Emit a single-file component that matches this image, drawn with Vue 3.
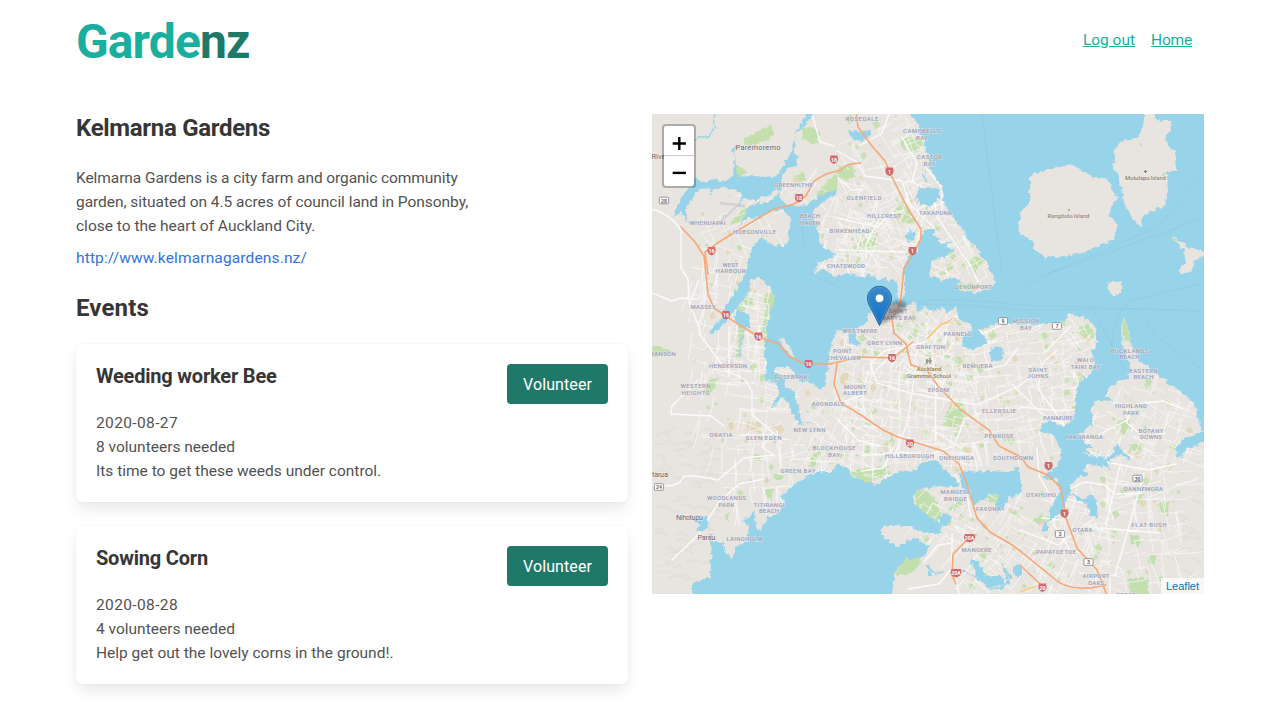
<script setup>
const events = [
  { title: 'Weeding worker Bee', date: '2020-08-27', need: '8 volunteers needed', text: 'Its time to get these weeds under control.' },
  { title: 'Sowing Corn', date: '2020-08-28', need: '4 volunteers needed', text: 'Help get out the lovely corns in the ground!.' },
]

// Small deterministic generator for street texture and parks
let seed = 7
const rnd = () => {
  seed = (seed * 16807) % 2147483647
  return seed / 2147483647
}
// x, y, width, height, grid angle (degrees), spacing
const districts = [
  [838, 116, 95, 150, -28, 13], [835, 180, 110, 90, 20, 14], [786, 168, 40, 40, 40, 14],
  [800, 215, 60, 60, 10, 12], [700, 195, 75, 55, -30, 18], [690, 240, 65, 130, 12, 13],
  [735, 280, 35, 90, 5, 11], [700, 355, 80, 90, 8, 13], [835, 325, 130, 130, 12, 9],
  [895, 308, 60, 60, 38, 7], [950, 320, 130, 130, -14, 11], [800, 385, 60, 85, 32, 12],
  [720, 430, 110, 70, -6, 14], [1095, 375, 105, 80, 24, 12], [1040, 450, 60, 140, 22, 12],
  [920, 480, 100, 60, 30, 11], [950, 530, 100, 60, 36, 12], [1090, 455, 90, 130, -12, 14],
  [932, 225, 60, 70, -32, 10], [850, 440, 120, 35, 4, 11], [1060, 320, 40, 60, -35, 10],
]
let streets = ''
const parks = []
const tans = []
for (const [x, y, w, h, a, s] of districts) {
  const r = (a * Math.PI) / 180
  const n = Math.round((w * h) / (s * s) * 1.7)
  for (let i = 0; i < n; i++) {
    const px = x + Math.round((rnd() * w) / s) * s + rnd() * 3
    const py = y + Math.round((rnd() * h) / s) * s + rnd() * 3
    const t = r + (rnd() > 0.5 ? Math.PI / 2 : 0) + (rnd() - 0.5) * 0.35
    const l = s * (0.7 + rnd() * 1.8)
    const dx = Math.cos(t) * l
    const dy = Math.sin(t) * l
    streets += `M${px.toFixed(1)} ${py.toFixed(1)}q${(dx / 2 + rnd() * 3).toFixed(1)} ${(dy / 2 + rnd() * 3).toFixed(1)} ${dx.toFixed(1)} ${dy.toFixed(1)}`
  }
  for (let i = 0; i < n / 3.6; i++) {
    const px = x + rnd() * w
    const py = y + rnd() * h
    const b = 1.2 + rnd() * rnd() * 5.5
    const d = `M${px.toFixed(1)} ${py.toFixed(1)}l${b.toFixed(1)} ${(-b * 0.5).toFixed(1)} ${(b * 0.6).toFixed(1)} ${b.toFixed(1)} ${(-b).toFixed(1)} ${(b * 0.7).toFixed(1)}z`
    if (rnd() > 0.25) parks.push(d)
    else tans.push(d)
  }
}
const parkPath = parks.join('')
const tanPath = tans.join('')

// Hill shading in the western ranges and eastern hills
let hills = ''
for (let i = 0; i < 90; i++) {
  const west = i < 68
  const x = west ? 652 + rnd() * 60 : 1165 + rnd() * 38
  const y = west ? 425 + rnd() * 165 : 460 + rnd() * 115
  hills += `M${x.toFixed(1)} ${y.toFixed(1)}q${(3 + rnd() * 5).toFixed(1)} ${(-5 + rnd() * 4).toFixed(1)} ${(6 + rnd() * 9).toFixed(1)} ${(-4 + rnd() * 10).toFixed(1)}`
}

// text, centre x, baseline y, width
const labels = [
  ['ROSEDALE', 862, 121, 33], ['CAMPBELLS', 922, 133, 38], ['BAY', 922, 139.5, 12], ['CASTOR', 929.5, 159, 25], ['BAY', 929.5, 165.5, 12],
  ['GREENHITHE', 793.5, 187, 39], ['WHENUAPAI', 707.5, 225, 36], ['HOBSONVILLE', 754.5, 234, 43],
  ['BEACH', 810, 218, 20], ['HAVEN', 810, 224.5, 20], ['GLENFIELD', 864, 199.5, 35], ['HILLCREST', 884, 217.5, 34],
  ['TAKAPUNA', 935.5, 215, 33], ['BIRKENHEAD', 849.5, 233, 40], ['CHATSWOOD', 846, 268, 38],
  ['WEST', 730.5, 266.5, 16], ['HARBOUR', 730.5, 273, 30], ['MASSEY', 703, 309, 25], ['WANSON', 662.3, 355.5, 27],
  ['HENDERSON', 728, 368, 38], ['WESTERN', 695.5, 387.5, 30], ['HEIGHTS', 695.5, 394.5, 28], ['ROSEBANK', 791, 378.5, 33],
  ['POINT', 842.5, 353, 19], ['CHEVALIER', 843.5, 359.5, 34], ['AVONDALE', 828, 405.5, 33], ['NEW LYNN', 809.5, 431.5, 32],
  ['SAINT', 898, 313, 19], ['MARYS BAY', 898, 320, 35], ['WESTMERE', 860, 332.5, 35], ['GREY LYNN', 884.5, 344.5, 35],
  ['GRAFTON', 930.5, 348.5, 29], ['PARNELL', 957.5, 336, 28], ['DEVONPORT', 973.5, 289, 37], ['MOUNT', 855, 388.5, 22],
  ['ALBERT', 855, 395, 24], ['EPSOM', 938.5, 391.5, 21], ['REMUERA', 977.5, 368, 30], ['ELLERSLIE', 999, 412.5, 34],
  ['MISSION', 1026, 323, 27], ['BAY', 1026, 329.5, 12], ['SAINT', 1038, 371.5, 19], ['JOHNS', 1038, 378, 21],
  ['WAI O', 1085.5, 362, 17], ['TAIKI BAY', 1085.5, 369, 30], ['BUCKLANDS', 1129.5, 352.5, 38], ['BEACH', 1129.5, 359, 20],
  ['EASTERN', 1143.5, 372.5, 28], ['BEACH', 1143.5, 379, 20], ['HIGHLAND', 1131, 408, 32], ['PARK', 1131, 414.5, 16],
  ['PANMURE', 1058, 419.5, 30], ['PAKURANGA', 1084, 439, 38], ['BOTANY', 1151, 432.5, 25], ['DOWNS', 1151, 439, 22],
  ['PENROSE', 999, 437.5, 29], ['SOUTHDOWN', 1013, 460, 40], ['ONEHUNGA', 956.5, 460, 35], ['HILLSBOROUGH', 909.5, 457.5, 49],
  ['BLOCKHOUSE', 834, 449.5, 43], ['BAY', 834, 456.5, 12], ['ORATIA', 721, 437, 23], ['GLEN EDEN', 763.5, 440, 36],
  ['GREEN BAY', 798, 473, 35], ['WOODLANDS', 726.5, 500, 39], ['PARK', 726.5, 506.5, 16], ['TITIRANGI', 769, 506.5, 31],
  ['BEACH', 769, 513, 20], ['LAINGHOLM', 744.5, 540.5, 36], ['MANGERE', 955.5, 494, 30], ['BRIDGE', 955.5, 500.5, 23],
  ['FAVONA', 988.5, 510.5, 25], ['MANGERE', 976.5, 552, 30], ['OTAHUHU', 1041, 497, 30], ['OTARA', 1082.5, 532, 20],
  ['PAPATOETOE', 1056, 553.5, 40], ['DANNEMORA', 1143.5, 490.5, 39], ['FLAT BUSH', 1149, 526.5, 35],
  ['AIRPORT', 1096, 578, 27], ['OAKS', 1096, 584.5, 16], ['TOTARA', 1128, 596.5, 24],
]
// text, x, y, sign kind
const shields = [
  ['18', 834, 159.5, 'r'], ['18', 799, 198, 'r'], ['16', 711.5, 251, 'r'], ['1', 889.5, 171.5, 'r'], ['1', 912.5, 251, 'r'],
  ['16', 726, 315, 'r'], ['16', 758.5, 336.5, 'r'], ['16', 808.5, 364, 'r'], ['16', 892, 358, 'r'], ['20', 910, 443.5, 'r'],
  ['1', 1048.5, 466, 'r'], ['1', 1064.5, 513.5, 'r'], ['20A', 969.5, 538, 'r'], ['20A', 956, 573, 'r'], ['20', 1042.5, 587.5, 'r'],
  ['28', 664, 200.5, 'w'], ['24', 659, 487, 'w'], ['9', 1003, 321, 'w'], ['7', 1057, 326, 'w'], ['30', 1137.5, 478.5, 'w'],
  ['3', 1060, 534, 'w'], ['3', 1088.5, 562, 'w'],
]
</script>

<template>
  <div class="page">
    <header class="header">
      <h1 class="brand">Garde<span>nz</span></h1>
      <nav class="nav"><a href="#" class="logout">Log out</a><a href="#" class="home">Home</a></nav>
    </header>

    <main class="columns">
      <section class="info">
        <h2 class="title name">Kelmarna Gardens</h2>
        <p class="about">
          <span class="l1">Kelmarna Gardens is a city farm and organic community</span>
          <span class="l2">garden, situated on 4.5 acres of council land in Ponsonby,</span>
          <span>close to the heart of Auckland City.</span>
        </p>
        <a class="site" href="#">http://www.kelmarnagardens.nz/</a>
        <h2 class="title events">Events</h2>
        <article v-for="e in events" :key="e.title" class="card">
          <div class="card-top">
            <h3>{{ e.title }}</h3>
            <button class="btn">Volunteer</button>
          </div>
          <p class="date">{{ e.date }}</p>
          <p>{{ e.need }}</p>
          <p>{{ e.text }}</p>
        </article>
      </section>

      <section class="map">
        <svg class="tiles" viewBox="652 114 552 480" width="552" height="480">
          <defs>
            <linearGradient id="pin" x1="0" y1="0" x2="0" y2="1"><stop offset="0" stop-color="#398bc9" /><stop offset="1" stop-color="#126fc6" /></linearGradient>
            <filter id="soft" x="-30%" y="-30%" width="160%" height="160%"><feGaussianBlur stdDeviation="1.7" /></filter>
            <filter id="coast" filterUnits="userSpaceOnUse" x="640" y="100" width="576" height="506">
              <feTurbulence type="fractalNoise" baseFrequency=".22" numOctaves="2" seed="4" result="n" />
              <feDisplacementMap in="SourceGraphic" in2="n" scale="6" xChannelSelector="R" yChannelSelector="G" />
            </filter>
          </defs>
          <rect x="652" y="114" width="552" height="480" fill="#e8e4df" />
          <path :d="hills" fill="none" stroke="#dfdad4" stroke-width="1.8" opacity=".6" />
          <g fill="#c3dfae">
            <path :d="parkPath" opacity=".85" />
            <g filter="url(#coast)">
              <path d="M743 140l15-9 13-6 3 8-6 8-14 4-8 1zM735 166l9 2 2 5-8 6-3-4zM802 128l10-1 8 6-3 10-9 0-6-7zM794 176l9-3 3 6-5 4zM822 187l15-14v18l-18 10-6-1zM731 222l14-15 5-1-8 13-11 7zM900 138l18-1 5 8-12 10-8-6zM838 165l14 0 4 11-9 5-9-4zM893 214l9-15 3 5 12 18-12 2zM858 243l14-6 8 8-14 6zM967 261l8-5 9 4-9 14zM765 295l8-3 2 17-7 20 1 12-7-8 3-19zM745 293l8 5-1 10-8-5zM652 346l12 2 8 4-4 4-14 1zM740 319l4 2-4 36-4 2zM709 380l9-2-2 10-9 6-4-2zM729 422l6-4-3 10-5 1zM951 404l9-4 6 7-2 15-12 7-9-3 4-12zM953 285l25-2 8 4-14 3-14-2zM1081 326l7-1 6 8 0 6-10-1-6-8zM1124 318l5 9 1 12-5 3-3-14zM1076 378l10-3-4 8-10 2zM1144 378l9 2-3 8zM1117 423l10-5 3 9-7 8-6-4zM1157 504l12-2-1 14-8-5zM1128 578l20 0 0 16h-17zM1130 534l9 1 1 11-9-1zM1147 556l10-1-3 10-6-2zM1034 520l7-6 7 7-4 8zM850 472l14-3 26-3-8 12-17 6-11-7zM890 438l5 2-6 9-6-4zM863 452l10-3-4 9zM914 489l13 2 10 12 6 15-8 3-19-14zM947 508l12-7 3 3-12 8zM895 573l10-14 15-4 1 8-10 11-14 1zM766 487l7 0-1 13-6-3zM811 455l7-3-2 14-6 1zM773 474l12 2-2 3-9 0zM724 515l5-2 0 8-5-1zM755 453l6 3-2 6-5-2zM982 497l19-3-2 10-7-2zM1007 512l11 4 3 3-12-2zM1062 316l4 4-4 7zM1077 346l7 4-6 1zM1129 444h12v7h-10z" />
            </g>
          </g>
          <path :d="tanPath" fill="#e3d6b4" opacity=".8" />
          <path fill="#e0d8bb" d="M745 422l17 0-2 10-12-1zM841 374l8-2-2 14-7-3z" />
          <path fill="#dfd0d4" d="M727 357l7-1-1 7-7 0zM914 199l4-4 2 7-5 2zM1037 523l9-2-4 8z" />
          <path :d="streets" fill="none" stroke="#f8f7f7" stroke-width=".85" opacity=".9" />
          <g fill="none" stroke="#fbfafb" stroke-width="1.4" stroke-linecap="round">
            <path d="M652 209q18 5 28 20M681 228v40l7 11 1 24 10 24 1 8 26 35 19 10 7 11v24l22 18 8 10M699 280l-8 20M652 293l20 8 8-3 19 1M729 327v49M698 380l-26 26-1 8 40 2 13 10M652 485q28 4 31-8 8-3 35 3l26-22 30-3-12-8 10-14M672 560l27-26 20-32 20-18 25-5M812 114l8 28 14 4M837 151l20 11 8 14 37 5 10 30M889 114l-7 19-23 13M838 178l14 12 10-1M837 250l70 2M837 218l40 9 12-12 15-5M906 200l28 28-1 12M902 137l15 26-5 19 21 11 4 24 35 51 6 14M881 215l-15 29v14M925 166l17 22v22" />
            <path d="M955 316l17 5 11 13 37-18 20 10M926 342l-42 9-14 13 7 19 33 10 27 5 40 7 42-19 23-17M868 372l-6 23-25 9M907 344l-19 14-12 12M914 380l-7 44-12 30M932 350l4 40-1 50M964 420l-10 26-23 8-68 1M838 420l20 20 22 6M985 370l20-5 13-17M1013 385l30 30 22 10M1057 350l-15 13-4 26 20 27 11 18M1045 352l26-26M1020 407l40 4 20-2M1071 450l37-20 19-10 10-16 26-3 20 8M1067 434l34 27 47 9 28-6M1127 403v20l18 15 20-5M1144 473l-17 60-12 43M1120 465l-14 60M1063 504l6-15 16-7 20 3 10 9 27-1M1100 528l60 5M1037 448l2 28 17 30-2 19 20 31M1042 518l19 2M1020 530l38 15 34-25M1110 578v16M955 475l12 20 4 23M952 534v34l-13 16-31 5M924 562l14-17 15-2M956 580l3 14M893 448l-10 20-22 3M933 430l28 18" />
          </g>
          <path d="M720 203l25 3M717 225l20-19" fill="none" stroke="#d2d0d4" stroke-width="2.3" />

          <g filter="url(#coast)">
            <g fill="#97d3e9">
              <path d="M909 104L911 116 915 120 919 127 921 134 925 139 925 149 930 157 930 169 937 179 942 187 943 202 947 210 952 216 958 225 965 232 969 240 975 246 980 255 987 261 988 268 993 274 996 283 990 289 975 293 962 291 955 286 961 281 953 277 941 280 937 276 931 279 928 273 932 261 947 256 955 249 945 247 952 241 942 243 934 236 934 229 925 229 919 240 918 250 909 256 904 266 903 282 899 287 893 279 887 283 886 276 877 280 869 274 862 278 848 273 837 277 824 269 814 274 818 262 826 260 837 254 825 249 819 239 817 224 812 214 817 207 824 201 837 193 837 189 819 196 809 204 795 207 787 205 779 197 781 188 782 178 787 168 797 166 798 158 793 151 796 145 794 137 804 126 813 114 815 104H809L807 114 797 131 792 147 789 157 779 172 772 177 752 176 737 177 735 155 730 151 735 146 733 176 723 181 715 180 701 182 695 177 692 187 682 195 675 211 674 218 681 211 689 224 685 210 690 202 699 189 712 188 709 198 714 189 725 188 735 189 744 196 751 201 762 198 770 195 776 189 780 192 771 201 756 204 747 208 745 215 739 227 748 217 759 219 770 211 782 209 791 218 789 231 789 239 785 245 775 246 761 237 753 247 749 259 744 274 740 284 732 297 724 307 722 318 714 326 709 334 717 331 726 321 735 309 749 314 750 327 740 328 735 318 738 305 744 299 750 291 749 281 759 277 770 287 774 297 772 311 767 324 767 337 764 351 767 367 765 381 776 382 779 391 770 411 782 397 789 404 792 414 799 424 807 421 815 424 801 421 799 408 794 391 785 387 784 379 775 372 775 367 790 367 799 381 812 383 820 390 825 384 825 374 829 366 829 354 834 337 837 330 847 331 848 342 855 345 863 344 856 340 854 329 867 324 867 314 887 307 894 304 904 308 915 301 917 311 927 307 930 311 944 308 946 313 955 307 959 319 970 324 973 330 966 333 962 341 963 347 973 350 985 345 987 338 978 331 994 324 1022 324 1040 325 1065 321 1070 313 1087 319 1097 329 1097 344 1092 352 1095 362 1094 370 1088 376 1078 384 1075 397 1075 417 1063 427 1050 420 1042 425 1040 432 1053 434 1058 445 1062 452 1057 466 1043 477 1045 480 1057 478 1060 492 1050 508 1050 518 1040 531 1048 531 1048 522 1060 514 1066 503 1069 493 1078 501 1087 504 1090 514 1097 518 1096 500 1092 494 1082 499 1071 493 1071 486 1080 476 1089 476 1084 470 1088 464 1099 465 1110 469 1107 461 1120 455 1129 458 1117 443 1112 454 1106 459 1090 457 1082 451 1094 447 1085 443 1080 434 1092 425 1092 407 1095 401 1115 402 1105 396 1109 389 1117 381 1128 379 1130 367 1122 344 1121 327 1124 317 1130 331 1130 342 1140 361 1160 376 1180 392 1195 404 1197 417 1204 432H1214V104z" />
              <path d="M837 465L847 467 854 479 862 481 877 484 897 472 917 470 919 463 937 461 950 474 960 484 957 487 937 486 914 491 914 504 932 519 942 524 940 534 917 531 912 526 887 525 880 529 884 537 897 547 915 537 929 547 924 557 907 559 895 571 892 594V604H692V584L710 577 712 551 709 542 722 542 724 551 732 559 735 547 747 541 749 527 742 519 750 517 754 510 756 527 760 531 767 517 779 513 785 501 780 496 795 484 815 472 832 472z" />
              <path d="M959 472L990 471 1010 472 1019 466 1022 494 1010 496 1003 510 996 512 995 502 1001 495 991 494 974 505 967 493 961 485zM1214 430V440L1204 442 1187 449 1178 458 1175 449 1183 439 1192 436 1204 432zM691 516l16 1 2 9-4 5-9-1 3-4-5-7zM918 189l9-2 13 2-1 9-8 9-9-2-5-9zM905 235l5-4 7 2-3 7-7 1zM848 130l12 2 9-2 3 4-10 7-11-2zM939 517l7-4 6 5-2 6-6 2-5-4zM708 534l6 0-3 5z" />
              <path d="M970 560l8 0 8 16 14 0 5 8-15 3-13-8zM1013 567l6-4 3 10-4 5-5-5z" />
              <circle cx="996.5" cy="354.5" r="7.5" />
            </g>
            <g fill="none" stroke="#97d3e9" stroke-linecap="round">
              <path stroke-width="1.3" d="M714 114q-2 10 2 13M713 129l-4 8-10 0-6 5M740 357l3-26M800 421l4 4M927 566l8 8 8-2M977 577l-18-7M985 586l22-8-5-13" />
              <path stroke-width="2.2" d="M1073 445l25 13 12 3 8-13 11 10M928 565l2 10M924 173l2 8M1003 568l8 10-7 8-14 3M744 196l-5 8" />
            </g>
            <g fill="#e8e4df">
              <path d="M1030 177l8-5 31-7 10 3 14 9 15 3 3 10 7 7-7 11-2 6 8 12-2 12-13 6-18 9-14 2-13 2-9-2-3 4-6-7-5-2-2-9-12-8-2-9 3-11 9-11zM1144 106h8l1 8 6 7 12 0 1 10-7 5 4 12 6 3 1 20-9 0 1 20-4 15-13 5-7 4-3 12-9-9-7-12-6-30-6-8 2-20 10-8 14-3 5-14zM1107 283l6-2 9 2-1 8-7 7-3-3zM1172 235l4 4 12 8 16 4h8v6h-8l-8 2-5 12-4 3-7-1 1-6 5-3-2-14-10-11z" />
              <path d="M781 338l5 4 8 11-1 4-8-7-5-9zM897 274h8v20l-7 8zM937 276l12 1-7 5zM948 322l12 6-4 6-8-3z" />
            </g>
          </g>
          <path fill="#c3dfae" d="M1139 143l3 1-1 3zM1164 172l2 3-5 2zM1171 240l2-2 4 4-4-1z" />
          <g fill="none" stroke="#84bfd9" stroke-width=".55" opacity=".6">
            <path d="M982 114l20 160M904 302q60-5 116 3l184 6M904 304q65 0 116 6l120-1M1048 274l108-46q18-20 48-55M1048 274l156-56M1092 308l32 60M1114 364q-8-42 16-63l74-18M1140 309l15 26 49 36M802 225l2 26M810 274l32 14M1020 289l28-15" />
          </g>

          <g fill="none" stroke="#f6a878" stroke-width="1.6" stroke-linecap="round">
            <path d="M856 112l2 15 14 19 13 15 7 16 15 30 14 22v10l-8 15-9 14-2 20-2 17-8 14 2 14 12 11 5 21 15 4 12 17 23 24 28 20 10 16 22 11 7 10 20 8 13 13 5 30 11 30 20 22 8 20 8 27" />
            <path d="M681 227l14 15 9 14 4 38 6 14 13 9 32 20 20 7 10 12 13 7 28 1 30-7 33 1 20-16M708 274l-3-22 14-10 28-17 27-16 20-5 12-8 8-15 12-7 15-4q5-7 20-7M837 364l-3 20 7 19 20 12 22 15 15 7 19 6 26 8 16 13 8 20 10 34 13 14 24 14 42 34q10 9 35 8l15-3M976 535l-9 5-14 14-1 21 4 9 M1020 565l20 19" />
          </g>
          <path d="M927 339l14-15 5-1 6-4" fill="none" stroke="#f4c968" stroke-width="1.4" />
          <path d="M1020 592l16-6" fill="none" stroke="#f4d078" stroke-width="1.4" />

          <g class="lbl">
            <text v-for="(l, i) in labels" :key="i" :x="l[1]" :y="l[2]" :textLength="l[3]" text-anchor="middle">{{ l[0] }}</text>
          </g>
          <g class="town">
            <text x="735.5" y="150" textLength="45">Paremoremo</text>
            <text x="651.500" y="159.3">River</text>
            <text x="676" y="519.5" textLength="27">Nihotupu</text>
            <text x="697.5" y="540" textLength="18">Parau</text>
            <text x="652" y="476.5" textLength="16">tarua</text>
          </g>
          <g class="place" text-anchor="middle">
            <text x="1068.5" y="218" textLength="42">Rangitoto Island</text>
            <text x="1145.5" y="179.5" textLength="41">Motutapu Island</text>
            <text x="929" y="371.3" textLength="25" fill="#8b7c4c">Auckland</text>
            <text x="929" y="378.3" textLength="44" fill="#8b7c4c">Grammar School</text>
          </g>
          <path d="M1145.5 170v3M1144 171.5h3M1068 210h2M927 359v5M930 358v6M926 361h6" stroke="#85786a" stroke-width="1.1" />

          <g v-for="(s, i) in shields" :key="'s' + i" :transform="`translate(${s[1]} ${s[2]})`" text-anchor="middle" class="shield">
            <template v-if="s[3] === 'r'">
              <path :transform="s[0].length > 2 ? 'scale(1.35 1)' : ''" d="M-3.6-4.1H3.6Q3.4-2.7 4.1-1.2 4.5 2.8 0 4.4-4.5 2.8-4.1-1.2-3.4-2.7-3.6-4.1z" fill="#d4686c" />
              <text y="2" fill="#fff">{{ s[0] }}</text>
            </template>
            <template v-else>
              <rect x="-4.6" y="-3.3" width="9.2" height="6.6" rx="1" fill="#fff" stroke="#8a8a8a" stroke-width=".9" />
              <text y="2" fill="#666">{{ s[0] }}</text>
            </template>
          </g>

          <path d="M880 325l8-18q9-11 18-4 2 6-9 13z" fill="#000" opacity=".3" filter="url(#soft)" />
          <path d="M879.5 286.3c-6.8 0-12 5.3-12 12 0 3.6 1.3 6 2.8 9l9.2 18.2 9.2-18.2c1.5-3 2.8-5.400 2.800-9 0-6.700-5.200-12-12-12z" fill="url(#pin)" stroke="#2e6c97" stroke-width="1" />
          <path d="M879.5 287.400c-6.200 0-10.900 4.800-10.900 10.900 0 3.400 1.200 5.600 2.700 8.500l8.200 16.300 8.200-16.300c1.500-2.900 2.700-5.100 2.700-8.500 0-6.100-4.700-10.900-10.900-10.900z" fill="none" stroke="#5fa5d8" stroke-width=".8" opacity=".6" />
          <circle cx="879.5" cy="298.2" r="4.300" fill="#fff" stroke="#2e6c97" stroke-width=".6" />
        </svg>
        <div class="zoom">
          <button aria-label="Zoom in"><svg width="30" height="30"><path d="M8.700 17.500h13.200M15.300 11v13" /></svg></button>
          <button aria-label="Zoom out"><svg width="30" height="30"><path d="M8.700 16.900h13.200" /></svg></button>
        </div>
        <a class="credit" href="#">Leaflet</a>
      </section>
    </main>
  </div>
</template>

<style>
body { background: #fff; overflow: hidden; }
</style>

<style scoped>
.page { width: 1128px; margin: 0 auto; height: 720px; font: 15.5px/24px Roboto, sans-serif; color: #525252; }
h1, h2, h3, p { margin: 0; }
.header { height: 114px; display: flex; justify-content: space-between; align-items: flex-start; }
.brand { font-size: 48px; line-height: 54px; font-weight: 700; letter-spacing: -.9px; color: #1aae9f; padding-top: 15px; }
.brand span { color: #207868; }
.nav { display: flex; gap: 16px; padding: 28px 12px 0 0; }
.nav a { color: #1aae9f; text-decoration: underline; }
.nav .home { letter-spacing: -.2px; }
.columns { display: grid; grid-template-columns: 552px 552px; gap: 24px; }
.info { display: flex; flex-direction: column; }
.title { font-size: 24px; line-height: 27px; font-weight: 700; color: #363636; padding-top: 1px; }
.name { letter-spacing: -.31px; margin-bottom: 24px; }
.events { letter-spacing: .15px; margin: 24px 0 22px; }
.about span { display: block; white-space: nowrap; }
.about .l1 { letter-spacing: -.08px; }
.about .l2 { letter-spacing: -.04px; }
.site { display: block; margin-top: 8px; color: #3273dc; text-decoration: none; letter-spacing: .14px; }
.card { height: 158px; box-sizing: border-box; padding: 20px; margin-bottom: 24px; border-radius: 6px; background: #fff; box-shadow: 0 8px 16px -2px rgba(10, 10, 10, .1), 0 0 0 1px rgba(10, 10, 10, .02); }
.card-top { display: flex; justify-content: space-between; height: 47px; }
.card h3 { font-size: 20px; line-height: 24px; font-weight: 700; color: #363636; letter-spacing: -.2px; }
.date { letter-spacing: .37px; }
.btn { width: 101px; height: 40px; padding: 1px 0 0; border: 0; border-radius: 4px; background: #207868; color: #fff; font: 16px/39px Roboto, sans-serif; letter-spacing: .1px; }
.map { position: relative; width: 552px; height: 480px; overflow: hidden; }
.tiles { display: block; font-family: Roboto, "Open Sans", sans-serif; }
.lbl text { font-size: 6px; font-weight: 500; fill: #979db6; stroke: #eeebec; stroke-width: 1px; stroke-opacity: .75; paint-order: stroke; }
.town text { font-size: 7.5px; fill: #66676f; stroke: #efecea; stroke-width: 1px; paint-order: stroke; }
.place text { font-size: 6px; font-weight: 500; stroke: #eeebe6; stroke-width: .8px; paint-order: stroke; }
.place text:not([fill]) { fill: #8d8173; }
.shield text { font-size: 5.2px; font-weight: 700; }
.zoom { position: absolute; left: 10px; top: 10px; width: 30px; border: 2px solid rgba(0, 0, 0, .25); border-radius: 4px; background: #fff; background-clip: padding-box; }
.zoom button { display: block; width: 30px; height: 30px; padding: 0; border: 0; background: none; }
.zoom button:first-child { border-bottom: 1px solid #ccc; }
.zoom svg { display: block; fill: none; stroke: #000; stroke-width: 2.4; }
.credit { position: absolute; right: 0; bottom: 0; padding: 0 5px; font: 11px/16px "Liberation Sans", Arial, sans-serif; color: #0078a8; background: rgba(255, 255, 255, .7); text-decoration: none; }
</style>
